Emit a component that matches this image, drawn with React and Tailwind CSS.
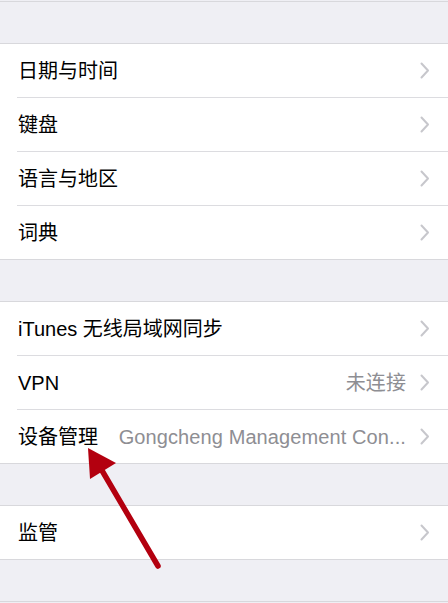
import React from 'react';

const font = { fontFamily: '"Liberation Sans", "Noto Sans CJK SC", sans-serif' };

function Chevron() {
  return (
    <svg width="10" height="17" viewBox="0 0 10 17" className="shrink-0 ml-[14px]">
      <path d="M1.5 1.5 L8 8.5 L1.5 15.5" fill="none" stroke="#c7c7cc" strokeWidth="2" strokeLinecap="round" strokeLinejoin="round" />
    </svg>
  );
}

function Row({ label, value, last }) {
  return (
    <div className="pl-[17px]">
      <div className={`h-[53px] box-content flex items-center pr-[18px] ${last ? '' : 'border-b border-[#dcdce0]'}`}>
        <span className="pl-[1px] text-[20px] text-black whitespace-nowrap shrink-0">{label}</span>
        <span className="flex-1 min-w-0 text-right text-[20px] text-[#8e8e93] whitespace-nowrap overflow-hidden pl-[14px] tracking-[0.1px]">
          {value}
        </span>
        <Chevron />
      </div>
    </div>
  );
}

function Group({ rows }) {
  return (
    <div className="bg-white border-y border-[#d8d8dc]">
      {rows.map((r, i) => (
        <Row key={r.label} {...r} last={i === rows.length - 1} />
      ))}
    </div>
  );
}

export default function App() {
  return (
    <div className="relative w-[448px] h-[603px] overflow-hidden bg-[#efeff4]" style={font}>
      <div className="h-[1px]" />
      <div className="h-[42px] border-t border-[#d8d8dc]" />
      <Group
        rows={[
          { label: '日期与时间' },
          { label: '键盘' },
          { label: '语言与地区' },
          { label: '词典' },
        ]}
      />
      <div className="h-[41px]" />
      <Group
        rows={[
          { label: 'iTunes 无线局域网同步' },
          { label: 'VPN', value: '未连接' },
          { label: '设备管理', value: 'Gongcheng Management Con...' },
        ]}
      />
      <div className="h-[41px]" />
      <Group rows={[{ label: '监管' }]} />
      <div className="h-[42px] border-b border-[#d8d8dc]" />

      {/* annotation arrow */}
      <svg className="absolute left-0 top-0 pointer-events-none" width="448" height="603">
        <line x1="158" y1="566" x2="97" y2="462" stroke="#b3000f" strokeWidth="5.5" strokeLinecap="round" />
        <polygon points="88,448 116,463 90,479" fill="#b3000f" />
      </svg>
    </div>
  );
}
